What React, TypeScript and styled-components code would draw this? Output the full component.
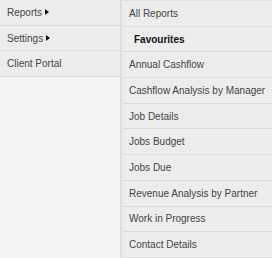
import React from 'react';
import styled, { createGlobalStyle } from 'styled-components';

const GlobalStyle = createGlobalStyle`
  html, body {
    margin: 0;
    padding: 0;
    background: #f4f4f4;
  }
`;

const Wrap = styled.div`
  width: 272px;
  height: 258px;
  overflow: hidden;
  display: flex;
  font-family: "Liberation Sans", Arial, sans-serif;
  font-size: 10px;
  color: #444;
`;

const Sider = styled.ul`
  width: 120px;
  flex-shrink: 0;
  margin: 0;
  padding: 0;
  list-style: none;
  background: #f4f4f4;
  border-right: 2px solid #dcdedf;
`;

const Panel = styled.ul`
  flex: 1;
  min-width: 0;
  margin: 0;
  padding: 0;
  list-style: none;
  background: #ececec;
  border-top: 1px solid #dfe2e3;
`;

const Item = styled.li<{ $bold?: boolean }>`
  height: 24.7px;
  display: flex;
  align-items: center;
  padding-left: ${(p) => (p.$bold ? '12px' : '7px')};
  background: #ececec;
  border-bottom: 1px solid #d8dcdd;
  font-weight: ${(p) => (p.$bold ? 700 : 400)};
  color: ${(p) => (p.$bold ? '#111' : '#444')};
  white-space: nowrap;
`;

const Arrow = styled.span`
  display: inline-block;
  margin-left: 3px;
  width: 0;
  height: 0;
  border-top: 3px solid transparent;
  border-bottom: 3px solid transparent;
  border-left: 4px solid #111;
`;

const reports = [
  'Annual Cashflow',
  'Cashflow Analysis by Manager',
  'Job Details',
  'Jobs Budget',
  'Jobs Due',
  'Revenue Analysis by Partner',
  'Work in Progress',
  'Contact Details',
];

export default function App() {
  return (
    <>
      <GlobalStyle />
      <Wrap>
        <Sider>
          <Item>
            Reports<Arrow />
          </Item>
          <Item>
            Settings<Arrow />
          </Item>
          <Item>Client Portal</Item>
        </Sider>
        <Panel>
          <Item>All Reports</Item>
          <Item $bold>Favourites</Item>
          {reports.map((r) => (
            <Item key={r}>{r}</Item>
          ))}
        </Panel>
      </Wrap>
    </>
  );
}
